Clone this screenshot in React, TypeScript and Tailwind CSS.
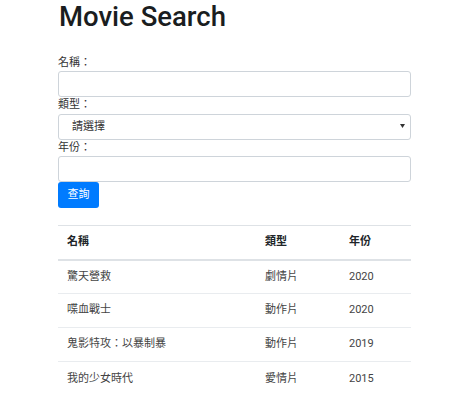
import React from "react";

const movies = [
  { name: "驚天營救", type: "劇情片", year: 2020 },
  { name: "喋血戰士", type: "動作片", year: 2020 },
  { name: "鬼影特攻：以暴制暴", type: "動作片", year: 2019 },
  { name: "我的少女時代", type: "愛情片", year: 2015 },
];

const font = { fontFamily: 'Roboto, "Noto Sans CJK TC", sans-serif' };

export default function App() {
  return (
    <div className="min-h-[400px] bg-white text-[#212529]" style={font}>
      <div className="ml-[58px] w-[353px]">
        <h1 className="h-[34px] text-[27.5px] leading-[34px] font-medium pl-[1px] mb-[21px] text-[#1a1d20]">Movie Search</h1>

        <form className="flex flex-col">
          <label className="block h-[16px] text-[11px] leading-[16px] text-[#333]">名稱：</label>
          <input
            type="text"
            className="h-[26px] w-full rounded-[3px] border border-[#ced4da] bg-white px-[9px] text-[11px] outline-none"
          />
          <label className="block h-[16px] text-[11px] leading-[16px] text-[#333]">類型：</label>
          <div className="relative h-[26px]">
            <select className="h-[26px] w-full appearance-none rounded-[3px] border border-[#ced4da] bg-white pl-[13px] text-[11px] text-[#333] outline-none">
              <option>請選擇</option>
              <option>劇情片</option>
              <option>動作片</option>
              <option>愛情片</option>
            </select>
            <svg
              className="pointer-events-none absolute right-[6px] top-[11px]"
              width="5"
              height="4"
              viewBox="0 0 5 4"
            >
              <path d="M0 0h5L2.5 4z" fill="#333" />
            </svg>
          </div>
          <label className="block h-[17px] text-[11px] leading-[17px] text-[#333]">年份：</label>
          <input
            type="text"
            className="h-[26px] w-full rounded-[3px] border border-[#ced4da] bg-white px-[9px] text-[11px] outline-none"
          />
          <div className="flex h-[26px]">
            <button
              type="button"
              className="h-[26px] w-[41px] rounded-[3px] bg-[#007bff] text-[11px] leading-[26px] text-white"
            >
              查詢
            </button>
          </div>
        </form>

        <table className="mt-[17px] w-full table-fixed border-collapse text-[11px]">
          <colgroup>
            <col className="w-[198px]" />
            <col className="w-[84px]" />
            <col className="w-[71px]" />
          </colgroup>
          <thead>
            <tr className="border-t border-[#dee2e6]">
              <th className="h-[34px] border-b-2 border-[#dee2e6] px-[9px] text-left font-bold">名稱</th>
              <th className="h-[34px] border-b-2 border-[#dee2e6] px-[9px] text-left font-bold">類型</th>
              <th className="h-[34px] border-b-2 border-[#dee2e6] px-[9px] text-left font-bold">年份</th>
            </tr>
          </thead>
          <tbody className="text-[#444]">
            {movies.map((m) => (
              <tr key={m.name} className="border-t border-[#e9ecef]">
                <td className="h-[34px] px-[9px]">{m.name}</td>
                <td className="h-[34px] px-[9px]">{m.type}</td>
                <td className="h-[34px] px-[9px]">{m.year}</td>
              </tr>
            ))}
          </tbody>
        </table>
      </div>
    </div>
  );
}
